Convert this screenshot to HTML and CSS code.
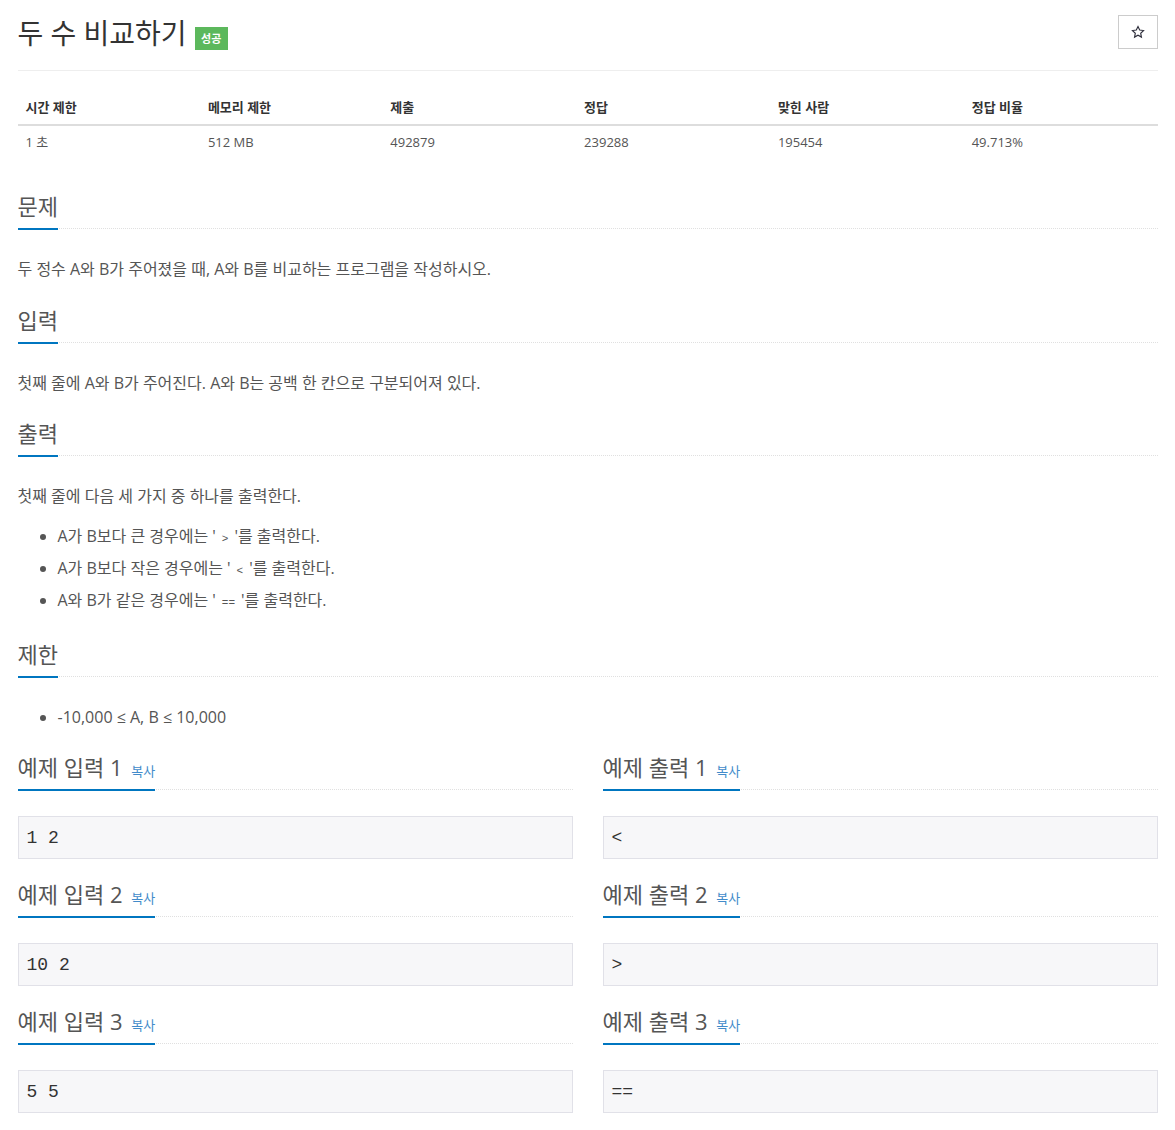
FILE: index.html
```html
<!DOCTYPE html>
<html lang="ko">
<head>
<meta charset="utf-8">
<title>두 수 비교하기</title>
<link rel="stylesheet" href="styles.css">
</head>
<body>
<div class="container">
  <div class="page-header">
    <h1 class="title"><span class="title-text">두 수 비교하기</span><span class="label-ac">성공</span></h1>
    <button class="star-btn" type="button" aria-label="즐겨찾기">
      <svg class="star-icon" width="14" height="14" viewBox="0 0 24 24"><path d="M12 2.6l2.9 6.1 6.6.8-4.9 4.6 1.3 6.6L12 17.4l-5.9 3.3 1.3-6.6-4.9-4.6 6.6-.8z" fill="none" stroke="#2d2d3a" stroke-width="1.9" stroke-linejoin="miter"/></svg>
    </button>
  </div>

  <table class="info">
    <colgroup><col class="c16"><col class="c16"><col class="c17"><col class="c17"><col class="c17"><col class="c17"></colgroup>
    <thead>
      <tr><th>시간 제한</th><th>메모리 제한</th><th>제출</th><th>정답</th><th>맞힌 사람</th><th>정답 비율</th></tr>
    </thead>
    <tbody>
      <tr><td>1 초</td><td>512 MB</td><td>492879</td><td>239288</td><td>195454</td><td>49.713%</td></tr>
    </tbody>
  </table>

  <section class="section">
    <div class="headline"><h2>문제</h2></div>
    <div class="problem-text"><p>두 정수 A와 B가 주어졌을 때, A와 B를 비교하는 프로그램을 작성하시오.</p></div>
  </section>

  <section class="section">
    <div class="headline"><h2>입력</h2></div>
    <div class="problem-text"><p>첫째 줄에 A와 B가 주어진다. A와 B는 공백 한 칸으로 구분되어져 있다.</p></div>
  </section>

  <section class="section">
    <div class="headline"><h2>출력</h2></div>
    <div class="problem-text">
      <p>첫째 줄에 다음 세 가지 중 하나를 출력한다.</p>
      <ul class="list after-p">
        <li>A가 B보다 큰 경우에는 '<code>&gt;</code>'를 출력한다.</li>
        <li>A가 B보다 작은 경우에는 '<code>&lt;</code>'를 출력한다.</li>
        <li>A와 B가 같은 경우에는 '<code>==</code>'를 출력한다.</li>
      </ul>
    </div>
  </section>

  <section class="section">
    <div class="headline"><h2>제한</h2></div>
    <div class="problem-text">
      <ul class="list">
        <li>-10,000 ≤ A, B ≤ 10,000</li>
      </ul>
    </div>
  </section>

  <div class="samples">
    <div class="sample">
      <div class="headline"><h2>예제 입력 1 <button type="button" class="copy">복사</button></h2></div>
      <pre class="sampledata">1 2</pre>
    </div>
    <div class="sample">
      <div class="headline"><h2>예제 출력 1 <button type="button" class="copy">복사</button></h2></div>
      <pre class="sampledata">&lt;</pre>
    </div>
    <div class="sample">
      <div class="headline"><h2>예제 입력 2 <button type="button" class="copy">복사</button></h2></div>
      <pre class="sampledata">10 2</pre>
    </div>
    <div class="sample">
      <div class="headline"><h2>예제 출력 2 <button type="button" class="copy">복사</button></h2></div>
      <pre class="sampledata">&gt;</pre>
    </div>
    <div class="sample">
      <div class="headline"><h2>예제 입력 3 <button type="button" class="copy">복사</button></h2></div>
      <pre class="sampledata">5 5</pre>
    </div>
    <div class="sample">
      <div class="headline"><h2>예제 출력 3 <button type="button" class="copy">복사</button></h2></div>
      <pre class="sampledata">==</pre>
    </div>
  </div>
</div>
</body>
</html>
```

FILE: styles.css
```css
* {
  box-sizing: border-box;
}

html,
body {
  margin: 0;
  padding: 0;
  background: #fff;
}

body {
  font-family: "Open Sans", "Noto Sans CJK KR", sans-serif;
  font-size: 14px;
  color: #333;
}

.container {
  width: 1140px;
  margin: 0 auto;
}

/* ---------- page header ---------- */
.page-header {
  display: flex;
  justify-content: space-between;
  align-items: flex-start;
  padding: 15px 0 20px;
  border-bottom: 1px solid #eee;
}

.title {
  display: flex;
  align-items: flex-start;
  margin: 3px 0 0;
  font-size: 28px;
  line-height: 30px;
  font-weight: 400;
  color: #333;
}

.label-ac {
  margin: 9px 0 0 8px;
  padding: 0 6.5px;
  height: 23px;
  line-height: 23px;
  font-size: 11px;
  font-weight: 700;
  color: #fff;
  background: #5cb85c;
}

.star-btn {
  width: 40px;
  height: 34px;
  padding: 0;
  border: 1px solid #ccc;
  background: #fff;
  display: flex;
  align-items: center;
  justify-content: center;
}

.star-icon {
  display: block;
  margin-top: -1px;
}

/* ---------- info table ---------- */
.info {
  width: 100%;
  table-layout: fixed;
  border-collapse: collapse;
  margin: 19px 0 37px;
  font-size: 13px;
  line-height: 18px;
}

.c16 {
  width: 16%;
}

.c17 {
  width: 17%;
}

.info th {
  text-align: left;
  font-weight: 700;
  color: #333;
  padding: 8px;
  border-bottom: 2px solid #ddd;
}

.info td {
  color: #555;
  padding: 7px 8px 8px;
}

/* ---------- sections ---------- */
.section {
  display: flow-root;
  margin-bottom: 18.5px;
}

.headline {
  display: flex;
  border-bottom: 1px dotted #e0e0e0;
  margin-bottom: 28px;
}

.headline h2 {
  margin: 0 0 -2px;
  padding-bottom: 11px;
  border-bottom: 2px solid #0076c0;
  font-size: 22px;
  line-height: 21px;
  font-weight: 400;
  color: #555;
}

.problem-text {
  font-size: 16px;
  line-height: 24px;
  color: #555;
}

.problem-text p {
  margin: 0 0 10px;
}

.list {
  margin: 0 0 10px;
  padding-left: 40px;
}

.list.after-p {
  margin-top: 16px;
  margin-bottom: 13px;
}

.list li + li {
  margin-top: 8px;
}

.problem-text code {
  font-family: "Liberation Mono", monospace;
  font-size: 11px;
  line-height: 1;
  padding: 0 6px;
  color: #555;
}

/* ---------- samples ---------- */
.samples {
  display: grid;
  grid-template-columns: 1fr 1fr;
  column-gap: 30px;
  row-gap: 25px;
}

.sample .headline {
  margin-bottom: 26px;
}

.copy {
  margin: 0 0 0 3px;
  padding: 0;
  border: none;
  background: none;
  font-family: "Open Sans", "Noto Sans CJK KR", sans-serif;
  font-size: 13px;
  line-height: 1;
  color: #428bca;
  vertical-align: baseline;
}

.sampledata {
  margin: 0;
  padding: 9.5px 8px;
  border: 1px solid #e1e1e8;
  background: #f7f7f9;
  font-family: "Liberation Mono", monospace;
  font-size: 18px;
  line-height: 22px;
  color: #333;
}
```
